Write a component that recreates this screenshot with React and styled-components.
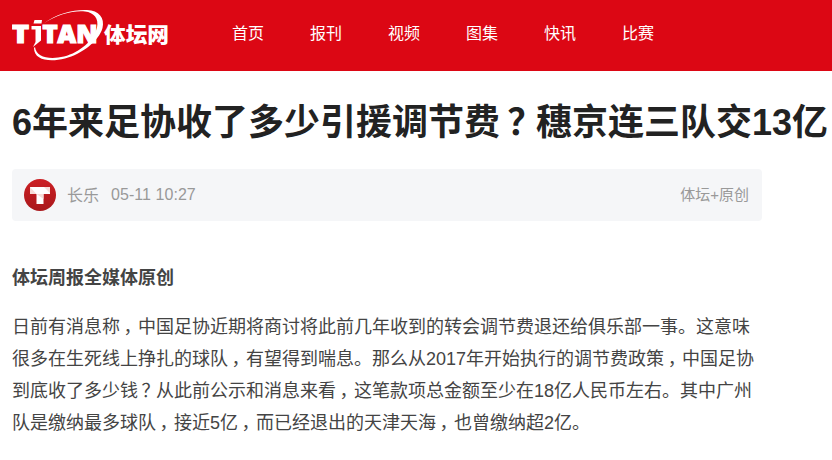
import React from "react";
import styled, { createGlobalStyle } from "styled-components";

const GlobalStyle = createGlobalStyle`
	* {
		box-sizing: border-box;
	}

	body {
		margin: 0;
		background: #fff;
		overflow: hidden;
		font-family: "Liberation Sans", "Noto Sans CJK SC", sans-serif;
	}
`;

const Header = styled.header`
	display: flex;
	align-items: flex-start;
	height: 71px;
	padding-left: 12px;
	background: #dc0714;
`;

const LogoLink = styled.a`
	width: 220px;
	height: 71px;
	color: #fff;
`;

const Nav = styled.nav`
	display: flex;
	gap: 46px;
`;

const NavLink = styled.a`
	color: #fff;
	font-size: 16px;
	line-height: 68px;
	cursor: pointer;
`;

const Article = styled.main`
	padding: 27px 0 0 12px;
`;

const Title = styled.h1`
	margin: 0 0 21px;
	color: #222;
	font-size: 36px;
	line-height: 50px;
	font-weight: 700;
	white-space: nowrap;
`;

const InfoBar = styled.div`
	display: flex;
	align-items: center;
	width: 750px;
	height: 52px;
	padding: 0 13px 0 12px;
	border-radius: 4px;
	background: #f5f6f8;
	color: #999;
	font-size: 16px;
`;

const Author = styled.span`
	margin: 0 12px 0 11px;
	padding-bottom: 3px;
`;

const PublishTime = styled.span`
	letter-spacing: 0.05px;
`;

const Source = styled.span`
	margin-left: auto;
	padding-bottom: 3px;
	font-size: 15px;
`;

const Content = styled.div`
	padding-top: 41px;
	color: #444;
	font-size: 18px;
	line-height: 32px;
`;

const Paragraph = styled.p`
	margin: 0 0 17px;
	font-weight: ${({ $bold }) => ($bold ? 700 : 400)};
`;

const Line = styled.span`
	display: block;
	white-space: nowrap;
`;

// half-width punctuation, padded back to a full cell so it sits in the middle
const Mark = styled.span`
	padding: 0 0.3em 0 0.2em;
	font-feature-settings: "halt";
`;

const links = ["首页", "报刊", "视频", "图集", "快讯", "比赛"];

const lines = [
	"日前有消息称，中国足协近期将商讨将此前几年收到的转会调节费退还给俱乐部一事。这意味",
	"很多在生死线上挣扎的球队，有望得到喘息。那么从2017年开始执行的调节费政策，中国足协",
	"到底收了多少钱？从此前公示和消息来看，这笔款项总金额至少在18亿人民币左右。其中广州",
	"队是缴纳最多球队，接近5亿，而已经退出的天津天海，也曾缴纳超2亿。",
];

const centerMarks = (text) =>
	text
		.split(/([，？])/)
		.map((part, i) => (/^[，？]$/.test(part) ? <Mark key={i}>{part}</Mark> : part));

const Logo = () => (
	<svg width="170" height="71" viewBox="12 0 170 71" fill="currentColor">
		<g
			fontFamily="Open Sans"
			fontWeight="800"
			fontSize="24"
			stroke="currentColor"
			strokeWidth="1.2"
		>
			<text x="12" y="43" textLength="17" lengthAdjust="spacingAndGlyphs">
				T
			</text>
			<text x="42.5" y="43" textLength="55" lengthAdjust="spacingAndGlyphs">
				TAN
			</text>
		</g>
		<path d="M34.5 20H42l-.5 3.5H33.5zM31.5 26H41v14.5L33 47l2.5-5V29.5h-4z" />
		<path d="M43 24C57 13 74 9.5 87 10c12 .5 18 8 15.5 18C99 41 82 54 65 58.500c-16 4-31 1.500-31-10.500l1-1c1 10 14 13 29 9.500C80 52.500 94 40 97 27.500c2-9-3-15-12-16C73 10.500 58 14 43 24z" />
		<text
			x="104"
			y="42"
			fontFamily="Noto Sans CJK SC"
			fontWeight="900"
			fontSize="21"
			textLength="65"
			lengthAdjust="spacingAndGlyphs"
		>
			体坛网
		</text>
	</svg>
);

const Avatar = () => (
	<svg width="32" height="32" viewBox="0 0 32 32">
		<defs>
			<linearGradient id="avatar" x1="0" y1="0" x2="0" y2="1">
				<stop offset="0" stopColor="#cc2024" />
				<stop offset="1" stopColor="#a9181c" />
			</linearGradient>
		</defs>
		<circle cx="16" cy="16" r="16" fill="url(#avatar)" />
		<path d="M6 8h20v7h-6.500v10h-7V15H6z" fill="#fff" />
		<path d="M6 8l6.500 7H6zM20 8h6v6zM12.500 15l7 5v-5z" fill="#f6dcd8" />
	</svg>
);

const App = () => {
	return (
		<>
			<GlobalStyle />
			<Header>
				<LogoLink>
					<Logo />
				</LogoLink>
				<Nav>
					{links.map((link) => (
						<NavLink key={link}>{link}</NavLink>
					))}
				</Nav>
			</Header>
			<Article>
				<Title>{centerMarks("6年来足协收了多少引援调节费？穗京连三队交13亿")}</Title>
				<InfoBar>
					<Avatar />
					<Author>长乐</Author>
					<PublishTime>05-11 10:27</PublishTime>
					<Source>体坛+原创</Source>
				</InfoBar>
				<Content>
					<Paragraph $bold>体坛周报全媒体原创</Paragraph>
					<Paragraph>
						{lines.map((line) => (
							<Line key={line}>{centerMarks(line)}</Line>
						))}
					</Paragraph>
				</Content>
			</Article>
		</>
	);
};

export default App;
